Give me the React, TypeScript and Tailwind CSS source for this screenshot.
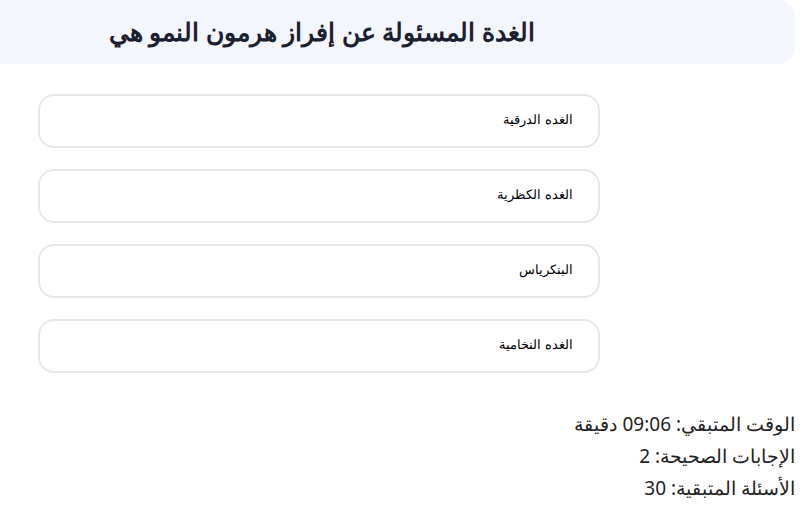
import React from "react";

const options = ["الغده الدرقية", "الغده الكظرية", "البنكرياس", "الغده النخامية"];

export default function App() {
  return (
    <div dir="rtl" className="w-[807px] h-[507px] bg-white overflow-hidden">
      <div className="mr-[12px] h-[64px] bg-[#f3f6fd] rounded-r-2xl flex items-center pr-[260px] pb-[1px]">
        <h1 className="text-[25px] font-bold text-[#1b2030] leading-none" style={{ fontFamily: '"Noto Sans", sans-serif' }}>
          الغدة المسئولة عن إفراز هرمون النمو هي
        </h1>
      </div>
      <div className="mt-[30px] pr-[207px] pl-[38px] flex flex-col gap-[21px]">
        {options.map((o) => (
          <div
            key={o}
            className="h-[54px] border-2 border-[#e5e7eb] rounded-2xl flex items-center pr-[25px] pb-[3px] text-[13px] text-black"
            style={{ fontFamily: '"Liberation Sans", Arial, sans-serif' }}
          >
            {o}
          </div>
        ))}
      </div>
      <div
        className="mt-[35px] pr-[12px] text-[19px] leading-[32px] text-[#222]"
        style={{ fontFamily: '"Noto Sans", sans-serif' }}
      >
        <div>الوقت المتبقي: 09:06 دقيقة</div>
        <div>الإجابات الصحيحة: 2</div>
        <div>الأسئلة المتبقية: 30</div>
      </div>
    </div>
  );
}
